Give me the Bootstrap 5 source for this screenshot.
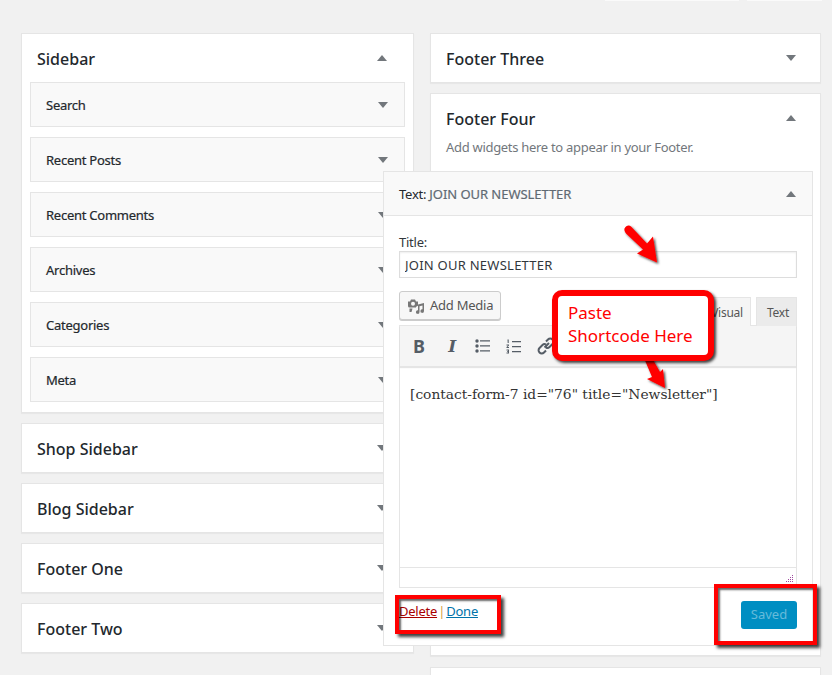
<!DOCTYPE html>
<html lang="en"><head><meta charset="utf-8"><title>Widgets</title>
<link href="https://cdn.jsdelivr.net/npm/bootstrap@5.3.0/dist/css/bootstrap.min.css" rel="stylesheet">
<style>
html,body{height:675px;overflow:hidden}
body{background:#f1f1f1;font-family:"Noto Sans",sans-serif;color:#23282d;font-size:13px;position:relative;letter-spacing:-.25px}
.stub-wrap{height:1px;margin-bottom:32px;padding-left:605px;gap:8px}
.stub-a{width:134px;background:#fafafa}.stub-b{width:75px;background:#fafafa}
.cols{padding-left:21px;gap:16px}
.col-l{width:393px}.col-r{width:391px}
.area{background:#fff;border:1px solid #e5e5e5;box-shadow:0 1px 1px rgba(0,0,0,.04);margin-bottom:10px}
.area-head{height:48px;padding:0 26px 0 15px}
.col-r .area-head{padding-right:24px}
.area-head h2{font-size:16px;font-weight:500;margin:0;padding-top:4px;color:#23282d;letter-spacing:0}
.tri-up,.tri-down{display:block;width:0;height:0;border-left:5px solid transparent;border-right:5px solid transparent}
.tri-up{border-bottom:6px solid #72777c}.tri-down{border-top:6px solid #72777c}
.rows{padding:0 8px 10px}
.wrow{height:45px;background:#f9f9f9;border:1px solid #e5e5e5;margin-bottom:10px;padding:0 16px 0 15px;font-size:13px;font-weight:400}
.wrow span{padding-top:2px;-webkit-text-stroke:.2px #23282d}
.wrow:last-child{margin-bottom:0}
.area-four{height:563px;position:relative;margin-bottom:11px;z-index:1}
.area-next{height:8px;margin-bottom:0;border-bottom:0}
.desc{color:#72777c;padding:0 15px;font-size:13px;line-height:18px;margin-top:-4px;letter-spacing:-.3px}
.pop{position:absolute;left:-48px;top:77px;width:430px;height:475px;background:#fff;border:1px solid #e5e5e5}
.pop-head{height:44px;background:#f9f9f9;border-bottom:1px solid #e5e5e5;padding:0 16px 0 15px;font-size:13px;font-weight:400}
.pop-title{padding-top:2px}
.pop-title .gray{color:#606a73;-webkit-text-stroke:.2px #606a73;letter-spacing:-.05px}
.pop-body{padding:17px 15px 0}
.lbl{font-size:13px;line-height:18px;color:#32373c;margin:0}
.title-input{display:block;width:398px;height:27px;border:1px solid #ddd;padding:0 5px;font:13px "Noto Sans",sans-serif;letter-spacing:.25px;color:#32373c;box-shadow:inset 0 1px 2px rgba(0,0,0,.07);outline:0;border-radius:0;margin-bottom:13px}
.media-line{height:34px}
.media-btn{width:102px;height:29px;border:1px solid #ccc;background:#f7f7f7;border-radius:3px;box-shadow:0 1px 0 #ccc;color:#555;font-size:13px;gap:5px;padding:1px 0 0 7px}
.tabs-box{gap:5px;align-self:flex-end}
.etab{height:29px;font-size:12px;line-height:29px;color:#555;padding:0 7px 0 10px;border:1px solid #e5e5e5;border-bottom:0;background:#ebebeb;margin-bottom:-1px;position:relative}
.etab-on{background:#f5f5f5;width:60px;text-align:right;color:#555}
.ed{width:398px;border:1px solid #e5e5e5}
.ed-tools{height:41px;background:#f5f5f5;border-bottom:1px solid #e5e5e5;box-shadow:0 1px 1px rgba(0,0,0,.1);padding-left:13px;gap:15px;color:#555d66}
.t-b{font:700 18px "Noto Sans",sans-serif;width:16px}
.t-i{font:italic 700 17px "DejaVu Serif",serif;width:16px;text-align:center}
.ed-text{height:200px;padding:14px 10px;font:13.8px/26px "DejaVu Serif",serif;letter-spacing:0;color:#333}
.ed-status{height:20px;border-top:1px solid #e5e5e5;position:relative}
.grip{position:absolute;right:2px;bottom:3px}
.pop-foot{padding:13px 0 0;height:57px}
.pop-links{font-size:13px;line-height:18px;margin-top:1px;word-spacing:-2px}
.a-del{color:#a00;text-decoration:underline}.a-done{color:#0073aa;text-decoration:underline}
.sep{color:#d59b3c}
.saved{width:56px;height:28px;background:#008ec2;color:#66bbda;border:0;border-radius:3px;font-size:13px;padding:0}
.anno-svg{position:absolute;left:0;top:0;z-index:3;pointer-events:none;overflow:visible}
.callout{position:absolute;left:552px;top:290px;width:162px;height:71px;z-index:4;background:#fff;border:6px solid #f00;border-radius:10px;box-shadow:2px 2px 3px rgba(0,0,0,.75);color:#f00;font-size:17px;line-height:23px;padding:5px 0 0 10px;letter-spacing:0}
.redbox{position:absolute;z-index:4;border:4px solid #f00;box-shadow:3px 3px 3px rgba(0,0,0,.75),inset 2px 2px 2px rgba(0,0,0,.6)}
.rb1{left:395px;top:595px;width:106px;height:39px}
.rb2{left:714px;top:584px;width:103px;height:61px}
</style></head>
<body>
<div class="d-flex stub-wrap"><div class="stub-a"></div><div class="stub-b"></div></div>
<div class="d-flex align-items-start cols">
 <div class="col-l">
  <div class="area">
   <div class="area-head d-flex align-items-center justify-content-between"><h2>Sidebar</h2><i class="tri-up"></i></div>
   <div class="rows">
    <div class="wrow d-flex align-items-center justify-content-between"><span>Search</span><i class="tri-down"></i></div>
    <div class="wrow d-flex align-items-center justify-content-between"><span>Recent Posts</span><i class="tri-down"></i></div>
    <div class="wrow d-flex align-items-center justify-content-between"><span>Recent Comments</span><i class="tri-down"></i></div>
    <div class="wrow d-flex align-items-center justify-content-between"><span>Archives</span><i class="tri-down"></i></div>
    <div class="wrow d-flex align-items-center justify-content-between"><span>Categories</span><i class="tri-down"></i></div>
    <div class="wrow d-flex align-items-center justify-content-between"><span>Meta</span><i class="tri-down"></i></div>
   </div>
  </div>
  <div class="area"><div class="area-head d-flex align-items-center justify-content-between"><h2>Shop Sidebar</h2><i class="tri-down"></i></div></div>
  <div class="area"><div class="area-head d-flex align-items-center justify-content-between"><h2>Blog Sidebar</h2><i class="tri-down"></i></div></div>
  <div class="area"><div class="area-head d-flex align-items-center justify-content-between"><h2>Footer One</h2><i class="tri-down"></i></div></div>
  <div class="area"><div class="area-head d-flex align-items-center justify-content-between"><h2>Footer Two</h2><i class="tri-down"></i></div></div>
 </div>
 <div class="col-r">
  <div class="area"><div class="area-head d-flex align-items-center justify-content-between"><h2>Footer Three</h2><i class="tri-down"></i></div></div>
  <div class="area area-four">
   <div class="area-head d-flex align-items-center justify-content-between"><h2>Footer Four</h2><i class="tri-up"></i></div>
   <div class="desc">Add widgets here to appear in your Footer.</div>
   <div class="pop">
    <div class="pop-head d-flex align-items-center justify-content-between"><span class="pop-title">Text: <span class="gray">JOIN OUR NEWSLETTER</span></span><i class="tri-up"></i></div>
    <div class="pop-body">
     <div class="lbl">Title:</div>
     <input class="title-input" type="text" value="JOIN OUR NEWSLETTER">
     <div class="d-flex justify-content-between media-line">
      <div class="media-btn d-flex align-items-center">
       <svg width="18" height="16" viewBox="0 0 18 16"><path fill="#777" d="M1 3.500h2l1-2h4l1 2h2v4.200a3 3 0 0 0-2 1.300v.5H2.500A1.500 1.500 0 0 1 1 8z"/><circle cx="6" cy="5.800" r="2" fill="#f7f7f7"/><path fill="#777" d="M2.500 10.500h3l-1 3.500h-2zM17 5v8a1.800 1.800 0 1 1-1.500-1.700V7.500l-3 .8V14a1.800 1.800 0 1 1-1.500-1.700V6.500z"/></svg>
       <span>Add Media</span>
      </div>
      <div class="d-flex tabs-box"><div class="etab etab-on">Visual</div><div class="etab">Text</div></div>
     </div>
     <div class="ed">
      <div class="ed-tools d-flex align-items-center">
       <span class="t-b">B</span><span class="t-i">I</span>
       <svg width="16" height="14" viewBox="0 0 16 14"><g fill="#555d66"><circle cx="2" cy="2" r="1.700"/><circle cx="2" cy="7" r="1.700"/><circle cx="2" cy="12" r="1.700"/><path d="M5 1.300h10v1.300H5zM5 6.300h10v1.300H5zM5 11.300h10v1.300H5z"/></g></svg>
       <svg width="16" height="15" viewBox="0 0 16 15"><g fill="#555d66"><path d="M6 2h9v1.200H6zM6 7h9v1.200H6zM6 12h9v1.200H6zM1.500.5h1.200v3.500h-1zM.5 5.500h2.500v1L1.500 8H3v1H.5V8L2 6.500H.5zM.5 10.500H3v4H.5v-1H2v-.5H1v-.8h1v-.7H.5z"/></g></svg>
       <svg width="18" height="18" viewBox="0 0 18 18"><g fill="none" stroke="#555d66" stroke-width="2"><path d="M7.500 10.500 12 6M9 4.500l2-2a3 3 0 0 1 4.500 4.500l-3 3a3 3 0 0 1-3.500.5"/><path d="M9 13.500l-2 2A3 3 0 0 1 2.500 11l3-3a3 3 0 0 1 3.500-.5"/></g></svg>
      </div>
      <div class="ed-text">[contact-form-7 id="76" title="Newsletter"]</div>
      <div class="ed-status"><svg class="grip" width="9" height="9" viewBox="0 0 9 9"><g fill="#a04aa0"><path d="M7 0h1v1H7zM5 2h1v1H5zM7 2h1v1H7zM3 4h1v1H3zM5 4h1v1H5zM7 4h1v1H7zM1 6h1v1H1zM3 6h1v1H3zM5 6h1v1H5zM7 6h1v1H7z"/></g></svg></div>
     </div>
     <div class="pop-foot d-flex justify-content-between">
      <div class="pop-links"><span class="a-del">Delete</span> <span class="sep">|</span> <span class="a-done">Done</span></div>
      <button class="saved" type="button">Saved</button>
     </div>
    </div>
   </div>
  </div>
  <div class="area area-next"></div>
 </div>
</div>
<svg class="anno-svg" width="832" height="675" viewBox="0 0 832 675">
 <defs><filter id="sh" x="-30%" y="-30%" width="170%" height="170%"><feDropShadow dx="1.500" dy="1.500" stdDeviation="1.200" flood-color="#000" flood-opacity=".7"/></filter></defs>
 <g filter="url(#sh)" fill="#f00">
  <path d="M624.500 228.500c1.500-3 4.500-4 6.500-2l16 17 6-7 4 26-20-9 6-4-16.500-15.500c-1.500-1.500-2.500-3.500-2-5.500z"/>
  <path d="M644 358h8l8 14 3-3 2 19-18-9 5-2z"/>
 </g>
</svg>
<div class="callout">Paste<br>Shortcode Here</div>
<div class="redbox rb1"></div>
<div class="redbox rb2"></div>
<script src="https://cdn.jsdelivr.net/npm/bootstrap@5.3.0/dist/js/bootstrap.bundle.min.js"></script>
</body></html>
